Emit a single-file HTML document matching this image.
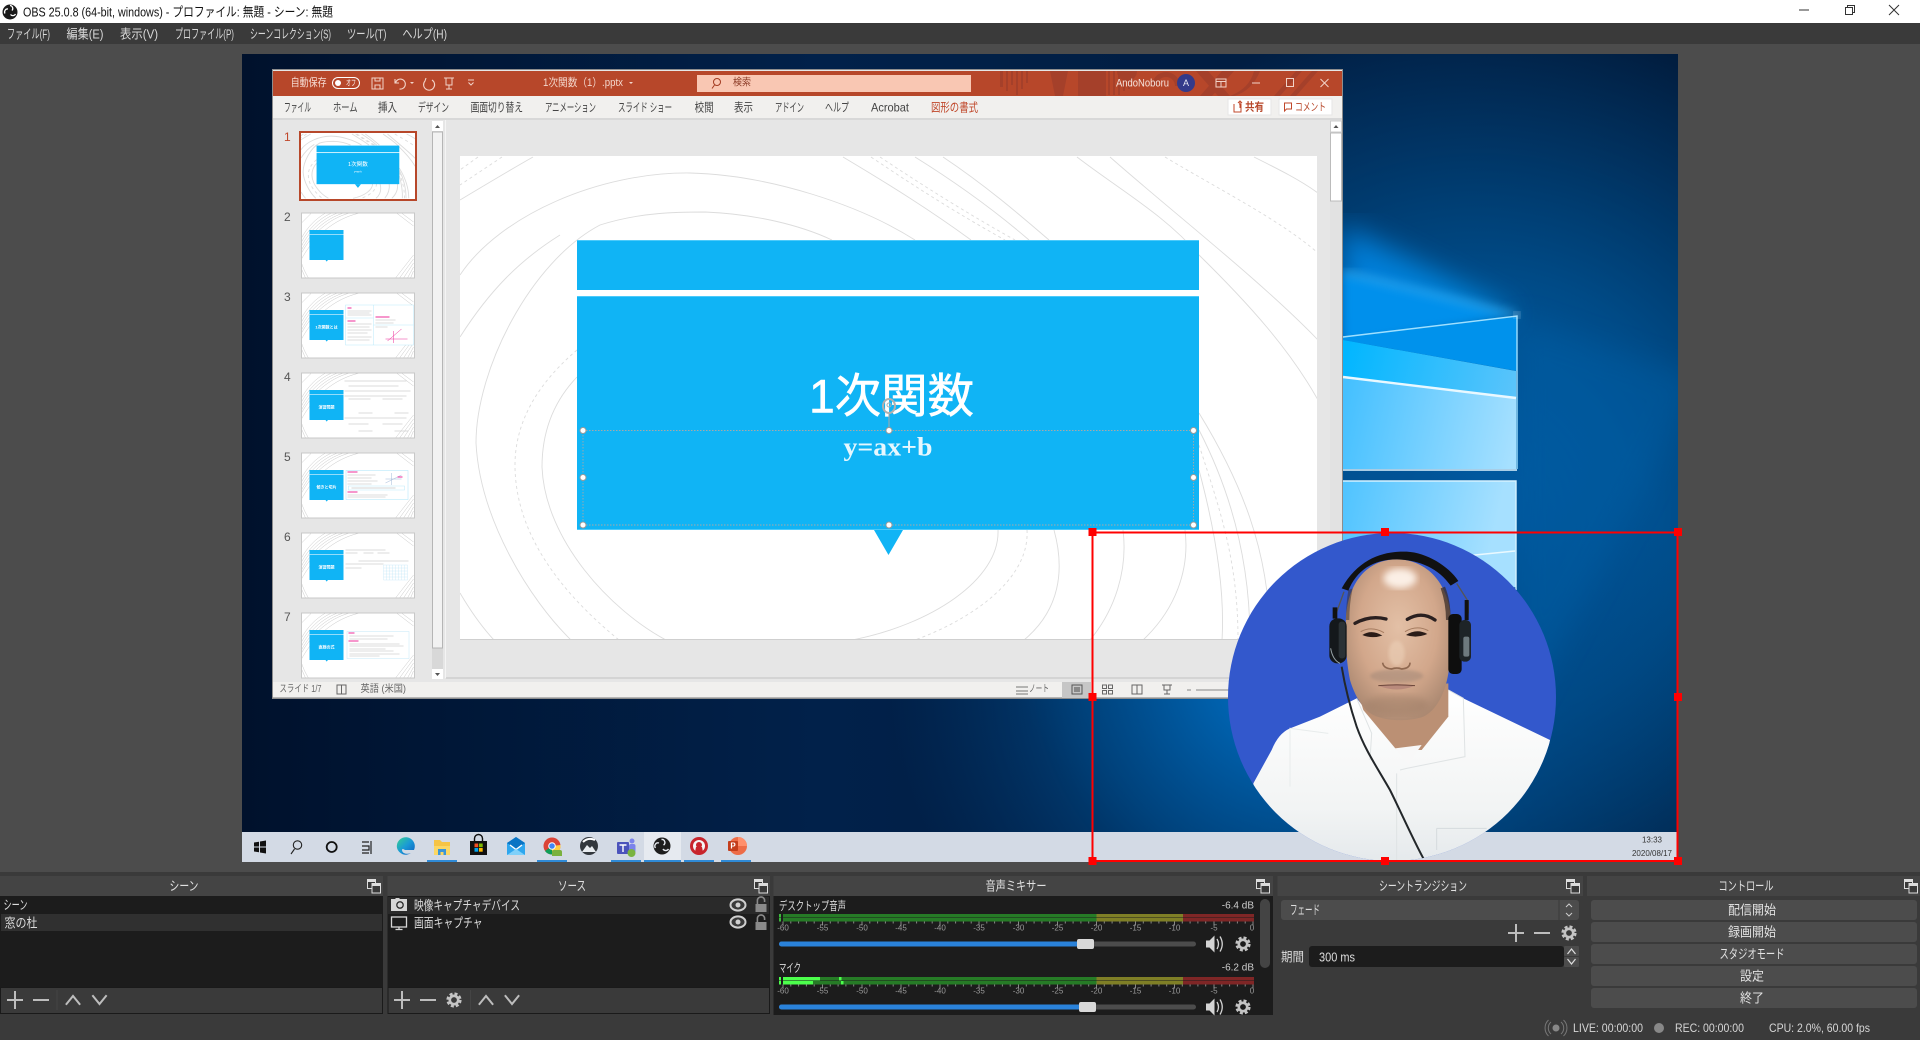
<!DOCTYPE html>
<html lang="ja">
<head>
<meta charset="utf-8">
<title>OBS 25.0.8</title>
<style>
html,body{margin:0;padding:0;width:1920px;height:1040px;overflow:hidden;background:#3a3a3a}
svg{display:block}
text{font-family:"Liberation Sans","Noto Sans CJK JP",sans-serif;dominant-baseline:central}
.m{font-size:13px;fill:#d8d8d8}
.h{font-size:13px;fill:#e0e0e0;text-anchor:middle}
.t{font-size:12px;fill:#444}
.l{font-size:13px;fill:#dcdcdc}
.n{font-size:8px;fill:#999;text-anchor:middle}
.b{font-size:13px;fill:#e2e2e2;text-anchor:middle}
.num{font-size:12px;fill:#555}
.tt{font-size:4px;fill:#fff;text-anchor:middle;font-weight:bold}
.ic{fill:none;stroke:#bdbdbd;stroke-width:2;stroke-linecap:square}
.ar{fill:none;stroke:#dcdcdc;stroke-width:.9;vector-effect:non-scaling-stroke}
.ad{fill:none;stroke:#dcdcdc;stroke-width:.9;stroke-dasharray:3 3;vector-effect:non-scaling-stroke}
.ar2{fill:none;stroke:#c2c2c2;stroke-width:.45}
.hd{fill:#fff;stroke:#9a9a9a;stroke-width:1}
.r{fill:#f00}
</style>
</head>
<body>
<svg width="1920" height="1040" viewBox="0 0 1920 1040" xmlns="http://www.w3.org/2000/svg">
<defs>
<linearGradient id="wb" x1="0" y1="0" x2="1" y2="0"><stop offset="0" stop-color="#00112c"/><stop offset=".4" stop-color="#01214a"/><stop offset="1" stop-color="#011a3a"/></linearGradient>
<radialGradient id="g1" gradientUnits="userSpaceOnUse" cx="1480" cy="500" r="500"><stop offset="0" stop-color="#0068b8"/><stop offset=".45" stop-color="#00508f" stop-opacity=".9"/><stop offset="1" stop-color="#00508f" stop-opacity="0"/></radialGradient>
<radialGradient id="g2" gradientUnits="userSpaceOnUse" cx="1290" cy="670" r="400"><stop offset="0" stop-color="#0074cc"/><stop offset=".5" stop-color="#004f90" stop-opacity=".7"/><stop offset="1" stop-color="#003a70" stop-opacity="0"/></radialGradient>
<linearGradient id="beam" gradientUnits="userSpaceOnUse" x1="1342" y1="300" x2="1520" y2="315"><stop offset="0" stop-color="#0086e6"/><stop offset="1" stop-color="#0096f0"/></linearGradient>
<linearGradient id="p1" gradientUnits="userSpaceOnUse" x1="1343" y1="400" x2="1516" y2="440"><stop offset="0" stop-color="#45c0ff"/><stop offset="1" stop-color="#a6e0ff"/></linearGradient>
<linearGradient id="p0" gradientUnits="userSpaceOnUse" x1="1343" y1="345" x2="1516" y2="390"><stop offset="0" stop-color="#00b6ff"/><stop offset="1" stop-color="#5ac4fb"/></linearGradient>
<radialGradient id="skin" cx=".5" cy=".42" r=".62"><stop offset="0" stop-color="#e3c0a6"/><stop offset=".6" stop-color="#d2a78b"/><stop offset="1" stop-color="#a98770"/></radialGradient>
<linearGradient id="shirt" x1="0" y1="0" x2="0" y2="1"><stop offset="0" stop-color="#ffffff"/><stop offset=".6" stop-color="#f2f4f4"/><stop offset="1" stop-color="#dfe4e8"/></linearGradient>
<linearGradient id="edge" x1="0" y1="0" x2="1" y2="1"><stop offset="0" stop-color="#35d08f"/><stop offset=".5" stop-color="#1a9ad6"/><stop offset="1" stop-color="#0f5fc0"/></linearGradient>
<filter id="bl8"><feGaussianBlur stdDeviation="10"/></filter>
<filter id="bl4"><feGaussianBlur stdDeviation="5"/></filter>
<filter id="bl14"><feGaussianBlur stdDeviation="14"/></filter>
<clipPath id="cprev"><rect x="242" y="54" width="1436" height="808"/></clipPath>
<clipPath id="ccirc"><circle cx="576" cy="531" r="492"/></clipPath>
<g id="arcs">
<path class="ar" d="M460 275C500 215 600 172 690 173C770 175 860 205 915 240"/>
<path class="ar" d="M571 640C530 600 480 520 476 443C476 370 530 262 600 225C640 212 680 212 705 212C755 214 800 225 832 240"/>
<path class="ar" d="M460 337C490 290 520 260 560 235"/>
<path class="ad" d="M577 350C530 390 515 430 515 465C515 540 570 600 619 640"/>
<path class="ar" d="M577 377C555 400 542 430 542 467C545 540 610 610 666 640"/>
<path class="ar" d="M998 530C1000 580 930 625 852 640"/>
<path class="ad" d="M1027 530C1030 580 970 620 915 640"/>
<path class="ar" d="M1054 530C1065 570 1060 610 1024 640"/>
<path class="ar" d="M1123 530C1128 570 1115 610 1090 640"/>
<path class="ar" d="M1185 530C1190 570 1175 610 1143 640"/>
<path class="ar" d="M1199 413C1240 480 1270 550 1270 640"/>
<path class="ar" d="M1199 430C1230 490 1250 560 1250 640"/>
<path class="ad" d="M1199 445C1220 510 1238 560 1238 640"/>
<path class="ar" d="M1199 470C1215 530 1225 590 1222 640"/>
<path class="ar" d="M843 157C890 185 930 210 971 240"/>
<path class="ad" d="M871 157C920 190 960 215 1005 240"/>
<path class="ad" d="M880 157C925 187 970 215 1015 240"/>
<path class="ar" d="M915 157C960 185 1000 215 1029 240"/>
<path class="ar" d="M943 157C985 185 1020 215 1049 240"/>
<path class="ar" d="M1077 157C1120 190 1165 215 1199 255C1250 305 1290 350 1318 400"/>
<path class="ar" d="M1110 157C1170 210 1260 280 1318 340"/>
<path class="ad" d="M1165 157C1220 190 1280 220 1318 253"/>
<path class="ar" d="M1254 157C1280 170 1300 180 1318 193"/>
<path class="ar" d="M533 157C510 170 485 185 460 200"/>
<path class="ad" d="M502 157L460 185"/>
<path class="ad" d="M478 157L460 170"/>
<path class="ar" d="M460 593C470 610 480 625 494 640"/>
</g>
<g id="arcs2">
<path class="ar2" d="M0 25C6 14 14 6 24 0M0 29C7 16 17 6 30 0M0 33C8 18 20 6 36 0M0 37C9 20 23 6 42 0M0 40C10 22 26 6 48 0M0 46C12 24 32 6 58 0M10 0L0 10M112 42L94 65M112 46L98 65M112 50L102 65M112 54L106 65M112 58L109 65M95 0L112 13M100 0L112 9M0 50C2 56 4 60 7 65M0 56L4 65"/>
</g>
<g id="box"><rect x="8" y="17" width="34" height="30" fill="#10b4f5"/><rect x="8" y="21" width="34" height=".7" fill="#cdeefc"/><path d="M24 47h2.4l-1.2 1.6z" fill="#10b4f5"/></g>
<g id="flt"><rect x="-6.5" y="-7.5" width="8" height="9" fill="#3a3a3a" stroke="#ddd" stroke-width="1"/><rect x="-6.5" y="-7.5" width="8" height="2.5" fill="#ddd"/><rect x="-2" y="-3.5" width="8.5" height="9.5" fill="#3a3a3a" stroke="#ddd" stroke-width="1"/><rect x="-2" y="-3.5" width="8.5" height="2.5" fill="#ddd"/></g>
<g id="gear"><circle r="4.2" fill="none" stroke="#c4c4c4" stroke-width="2.6"/><circle r="6.3" fill="none" stroke="#c4c4c4" stroke-width="2.6" stroke-dasharray="3 2"/></g>
<g id="plus"><path class="ic" d="M-7 0H7M0-8V8"/></g>
<g id="minus"><path class="ic" d="M-7 0H7"/></g>
<g id="up"><path class="ic" d="M-6.5 4L0-4 6.5 4" stroke-linecap="round"/></g>
<g id="dn"><path class="ic" d="M-6.5-4L0 4 6.5-4" stroke-linecap="round"/></g>
<g id="eye"><ellipse rx="7.5" ry="5.6" fill="#3a3a3a" stroke="#cfcfcf" stroke-width="2"/><circle r="2.5" fill="#cfcfcf"/></g>
<g id="lock"><rect x="-5.5" y="-1" width="11" height="8" fill="#8a8a8a"/><path d="M-3.6-1V-4.5a3.6 3.6 0 0 1 7.2 0V-3" fill="none" stroke="#8a8a8a" stroke-width="1.6"/></g>
<g id="spk"><path d="M-8-3.5h3.5l5-5v17l-5-5h-3.5z" fill="#d4d4d4"/><path d="M3-5q3 5 0 10M6-7.5q4.5 7.500 0 15" fill="none" stroke="#d4d4d4" stroke-width="1.3"/></g>
</defs>

<!-- base -->
<rect width="1920" height="1040" fill="#3a3a3a"/>
<rect y="44" width="1920" height="828" fill="#4c4c4c"/>

<!-- titlebar -->
<rect width="1920" height="23" fill="#fff"/>
<circle cx="10" cy="12" r="7.5" fill="#1a1a1a"/>
<path d="M10 5.5a3 3 0 0 1 2 5M15.5 14a3 3 0 0 1-5 .5M5 13.5a3 3 0 0 1 3-4.5" fill="none" stroke="#fff" stroke-width="1.3"/>
<text x="23" y="12" font-size="13" fill="#111" textLength="310" lengthAdjust="spacingAndGlyphs">OBS 25.0.8 (64-bit, windows) - プロファイル: 無題 - シーン: 無題</text>
<path d="M1799 10h10" stroke="#333" stroke-width="1"/>
<path d="M1845.5 7.5h7v7h-7zM1847.5 7.5v-2h7v7h-2" fill="none" stroke="#333" stroke-width="1"/>
<path d="M1889 5l10 10M1899 5l-10 10" stroke="#333" stroke-width="1"/>

<!-- menubar -->
<rect y="23" width="1920" height="21" fill="#3a3a3a"/>
<text class="m" x="7" y="34" textLength="43" lengthAdjust="spacingAndGlyphs">ファイル(F)</text>
<text class="m" x="66.5" y="34" textLength="37" lengthAdjust="spacingAndGlyphs">編集(E)</text>
<text class="m" x="120" y="34" textLength="38" lengthAdjust="spacingAndGlyphs">表示(V)</text>
<text class="m" x="175" y="34" textLength="59" lengthAdjust="spacingAndGlyphs">プロファイル(P)</text>
<text class="m" x="250" y="34" textLength="81" lengthAdjust="spacingAndGlyphs">シーンコレクション(S)</text>
<text class="m" x="347" y="34" textLength="39.5" lengthAdjust="spacingAndGlyphs">ツール(T)</text>
<text class="m" x="402.4" y="34" textLength="44.6" lengthAdjust="spacingAndGlyphs">ヘルプ(H)</text>

<!-- preview wallpaper -->
<g clip-path="url(#cprev)">
<rect x="242" y="54" width="1436" height="808" fill="url(#wb)"/>
<rect x="242" y="54" width="1436" height="808" fill="url(#g1)"/>
<rect x="242" y="54" width="1436" height="808" fill="url(#g2)"/>
<path d="M1517 315L1342 225V345z" fill="url(#beam)" opacity=".85" filter="url(#bl14)"/>
<path d="M1517 315L1342 272V345z" fill="#0090ec" filter="url(#bl4)"/>
<path d="M1517 315L1343 272" stroke="#6fd0ff" stroke-width="3" opacity=".7" filter="url(#bl4)"/>
<path d="M1517 318L1516 700H1530L1700 380z" fill="#005da3" opacity=".45" filter="url(#bl14)"/>
<path d="M1343 337L1517 316V371L1343 340z" fill="#0092ec"/>
<path d="M1343 340L1516 371V398L1343 377z" fill="url(#p0)"/>
<path d="M1343 377L1516 398V469H1343z" fill="url(#p1)"/>
<path d="M1343 377L1516 398" stroke="#e9f8ff" stroke-width="2.4"/>
<path d="M1343 337L1517 316V469" fill="none" stroke="#9fe0ff" stroke-width="1.4"/>
<path d="M1343 470H1517" stroke="#dff5ff" stroke-width="1.6"/>
<circle cx="1517" cy="315" r="3" fill="#e8f8ff" filter="url(#bl4)"/>
<path d="M1343 481H1516V587L1343 615z" fill="url(#p1)"/>
<path d="M1343 481H1516V590" fill="none" stroke="#d5f2ff" stroke-width="1.4"/>
<path d="M1465 556l50-5" stroke="#eaf9ff" stroke-width="1.5"/>
<!-- taskbar -->
<rect x="242" y="832" width="1436" height="30" fill="#d3dae5"/>
<rect x="644" y="832" width="37" height="30" fill="#e6eaf0"/>
<path d="M254 842.5l5-.8v4.8h-5zM260 841.500l6-1v6h-6zM254 847.500h5v4.800l-5-.8zM260 847.500h6v6l-6-1z" fill="#111"/>
<circle cx="297.500" cy="845" r="4.200" fill="none" stroke="#222" stroke-width="1.100"/><path d="M294.500 849l-3.500 5" stroke="#222" stroke-width="1.100"/>
<circle cx="331.700" cy="847" r="5" fill="none" stroke="#111" stroke-width="1.800"/>
<path d="M362 842h7M362 846h7v4h-7M362 853h7M371 841v13" fill="none" stroke="#222" stroke-width="1.200"/>
<path d="M397 848a9 9 0 1 1 17 2h-9q-3-2-3 0c0 3 4 5 9 3a9 9 0 0 1-14-5z" fill="url(#edge)"/>
<path d="M434 840h6l2 2h8v7h-16z" fill="#f6c445"/><path d="M434 846h16v9h-16z" fill="#fbd764"/><path d="M438 855v-6h8v6h-2.500v-3h-3v3z" fill="#3a96d8"/>
<rect x="470" y="841" width="17" height="14" fill="#111"/><path d="M474.500 841v-2.500a4 4 0 0 1 8 0v2.500" fill="none" stroke="#111" stroke-width="1.400"/>
<rect x="474.500" y="843.500" width="3.700" height="3.700" fill="#f25022"/><rect x="479" y="843.500" width="3.700" height="3.700" fill="#7fba00"/><rect x="474.500" y="848" width="3.700" height="3.700" fill="#00a4ef"/><rect x="479" y="848" width="3.700" height="3.700" fill="#ffb900"/>
<path d="M507 843L516 837L525 843V855H507z" fill="#2ea6ee"/><path d="M507 843L516 837L525 843L516 849z" fill="#0a74c4"/><path d="M510 845L516 849.500L522 845" fill="none" stroke="#fff" stroke-width="1.400"/><path d="M507 855L516 849L525 855z" fill="#7fd0fa"/>
<circle cx="552" cy="846" r="8.500" fill="#db4437"/><path d="M552 846l8.500-1a8.500 8.500 0 0 1-9 9.500z" fill="#ffcd40"/><path d="M552 846l-7 5a8.500 8.500 0 0 0 7 3.500z" fill="#0f9d58"/><circle cx="552" cy="846" r="3.300" fill="#4285f4" stroke="#fff"/>
<path d="M552 855a5 5 0 0 1 10 0v1h-10z" fill="#7ab13e"/><rect x="552" y="850" width="10" height="6" rx="2" fill="#7ab13e"/>
<circle cx="589" cy="846" r="9" fill="#32373d"/><path d="M582 852l5-7 3 3 2-2 4 6z" fill="#e8ecf0"/><path d="M583 842q5-5 12-2" fill="none" stroke="#fff" stroke-width="2"/>
<rect x="617" y="842" width="12" height="12" rx="1" fill="#4b53bc"/><path d="M619.500 845h7M623 845v7" stroke="#fff" stroke-width="1.400"/><circle cx="632" cy="841" r="2.500" fill="#7b83eb"/><rect x="629" y="844" width="6.500" height="9" rx="2" fill="#7b83eb"/><circle cx="631.500" cy="853" r="4" fill="#79b340"/>
<circle cx="662" cy="846" r="8.500" fill="#1e1e1e"/><path d="M661.500 839.500a3 3 0 0 1 2 5.500M668.500 849a3.200 3.200 0 0 1-5.500 0M655.500 848a3.200 3.200 0 0 1 3.500-5" fill="none" stroke="#e6eaf0" stroke-width="1.400"/>
<circle cx="699" cy="846" r="9" fill="#c8252c"/><circle cx="699" cy="846" r="6" fill="#f5f5f5"/><circle cx="699" cy="845" r="3" fill="#c8252c"/><path d="M695 852l1-5h6l1 5" fill="#c8252c"/>
<circle cx="738" cy="846" r="9" fill="#ed6c47"/><path d="M738 837a9 9 0 0 1 9 9h-9z" fill="#ff8f6b"/><rect x="728" y="841" width="10" height="10" rx="1" fill="#c43e1c"/><text x="733" y="846" font-size="8" fill="#fff" text-anchor="middle" font-weight="bold">P</text>
<rect x="427" y="860" width="30" height="2" fill="#2f8ad6"/><rect x="537" y="860" width="30" height="2" fill="#2f8ad6"/><rect x="611" y="860" width="30" height="2" fill="#2f8ad6"/><rect x="644" y="860" width="37" height="2" fill="#2f8ad6"/><rect x="684" y="860" width="30" height="2" fill="#2f8ad6"/><rect x="721" y="860" width="30" height="2" fill="#2f8ad6"/>
<text x="1652" y="840" font-size="8" fill="#333" text-anchor="middle">13:33</text>
<text x="1652" y="853.5" font-size="8" fill="#333" text-anchor="middle">2020/08/17</text>
</g>

<!-- PowerPoint window -->
<rect x="272.5" y="69.5" width="1070" height="629" fill="#e6e6e6" stroke="#8d8d8d" stroke-width="1"/>
<rect x="273" y="71" width="1069" height="25" fill="#b7472a"/>
<svg x="273" y="71" width="1069" height="25" viewBox="273 71 1069 25">
<g fill="#a5402a">
<path d="M1000 71h3v16h-3zM1006 71h2v20h-2zM1011 71h2v14h-2zM1016 71h2v24h-2zM1021 71h2v18h-2zM1026 71h2v12h-2z"/>
<path d="M1050 71h18l-5 25h-8zM1078 71h28v25h-28z"/>
<path d="M1108 71h2v24h-2zM1113 71h2v24h-2zM1118 71h2v24h-2zM1123 71h2v20h-2zM1128 71h2v18h-2z"/>
<circle cx="1127" cy="71" r="10"/>
<path d="M1152 86a14 14 0 0 1 28 0h-5a9 9 0 0 0-18 0z"/>
<path d="M1196 71h12l22 25h-12zM1222 71h12l-22 25h-12zM1254 71h6q-8 20-26 25h-4q20-8 24-25z"/>
<path d="M1296 71h6l-22 25h-6zM1312 71h6l-22 25h-6z"/>
</g>
</svg>
<text x="290.6" y="83" font-size="11" fill="#f6dcd3" textLength="36" lengthAdjust="spacingAndGlyphs">自動保存</text>
<rect x="332.5" y="77.5" width="27" height="11" rx="5.5" fill="none" stroke="#fff"/>
<circle cx="338" cy="83" r="3" fill="#fff"/>
<text x="346" y="83" font-size="8" fill="#fff" textLength="10" lengthAdjust="spacingAndGlyphs">オフ</text>
<path d="M372 78h11v11h-11zM375 78v3h5v-3M375 89v-4h5v4" fill="none" stroke="#f2d3c8" stroke-width="1"/>
<path d="M395 79v4h4M395.5 83a5 5 0 1 1 4 6" fill="none" stroke="#f2d3c8" stroke-width="1.1"/>
<path d="M410 82l2 2 2-2" fill="#f2d3c8" stroke="none"/>
<path d="M432 80a5.5 5.5 0 1 1-7 1l1-3" fill="none" stroke="#f2d3c8" stroke-width="1.1"/>
<path d="M444 78h10M446 78v7h6v-7M449 85v4M446 89h6" fill="none" stroke="#f2d3c8" stroke-width="1"/>
<path d="M468 80h6M468.5 82.5l2.5 2.5 2.5-2.5" fill="none" stroke="#f2d3c8" stroke-width="1"/>
<text x="543" y="83" font-size="11" fill="#f3d6cb" textLength="80" lengthAdjust="spacingAndGlyphs">1次関数（1）.pptx</text>
<path d="M629 82l2 2 2-2z" fill="#f3d6cb"/>
<rect x="697" y="75" width="274" height="17" fill="#f9c7b3"/>
<circle cx="717" cy="82" r="3.5" fill="none" stroke="#a33a20" stroke-width="1"/><path d="M714.5 85l-2.5 3.5" stroke="#a33a20"/>
<text x="733" y="83" font-size="10" fill="#8c3b26" textLength="18" lengthAdjust="spacingAndGlyphs">検索</text>
<text x="1116" y="83.500" font-size="11" fill="#f6e4dd" textLength="53" lengthAdjust="spacingAndGlyphs">AndoNoboru</text>
<circle cx="1186" cy="83" r="9" fill="#333a8a"/>
<text x="1186" y="83" font-size="9" fill="#e6e6f2" text-anchor="middle">A</text>
<path d="M1216 79h10v8h-10zM1216 81.5h10M1221 81.5v5.5" fill="none" stroke="#f2d3c8"/>
<path d="M1252 83h8" stroke="#f2d3c8"/>
<rect x="1286.5" y="78.5" width="7" height="8" fill="none" stroke="#f2d3c8"/>
<path d="M1320.5 79l8 8M1328.5 79l-8 8" stroke="#f2d3c8"/>

<!-- tabs -->
<rect x="273" y="96" width="1069" height="22" fill="#f1f0ee"/>
<rect x="273" y="118" width="1069" height="2" fill="#d8d8d8"/>
<text class="t" x="284" y="107.500" textLength="27" lengthAdjust="spacingAndGlyphs">ファイル</text>
<text class="t" x="333" y="107.500" textLength="24.5" lengthAdjust="spacingAndGlyphs">ホーム</text>
<text class="t" x="378" y="107.500" textLength="19" lengthAdjust="spacingAndGlyphs">挿入</text>
<text class="t" x="418" y="107.500" textLength="31" lengthAdjust="spacingAndGlyphs">デザイン</text>
<text class="t" x="470.6" y="107.500" textLength="52.4" lengthAdjust="spacingAndGlyphs">画面切り替え</text>
<text class="t" x="545" y="107.500" textLength="51" lengthAdjust="spacingAndGlyphs">アニメーション</text>
<text class="t" x="618" y="107.500" textLength="54" lengthAdjust="spacingAndGlyphs">スライド ショー</text>
<text class="t" x="694.6" y="107.500" textLength="19" lengthAdjust="spacingAndGlyphs">校閲</text>
<text class="t" x="734" y="107.500" textLength="19" lengthAdjust="spacingAndGlyphs">表示</text>
<text class="t" x="775" y="107.500" textLength="29" lengthAdjust="spacingAndGlyphs">アドイン</text>
<text class="t" x="825" y="107.500" textLength="24" lengthAdjust="spacingAndGlyphs">ヘルプ</text>
<text class="t" x="871" y="107.500" textLength="38" lengthAdjust="spacingAndGlyphs">Acrobat</text>
<text class="t" style="fill:#c0472a" x="931" y="107.500" textLength="47" lengthAdjust="spacingAndGlyphs">図形の書式</text>
<rect x="1228" y="99" width="43" height="16" fill="#fff" stroke="#e6e6e6"/>
<path d="M1234 104v8h7v-8h-2M1238 103l2-2 2 2M1240 102v6" fill="none" stroke="#c0472a"/>
<text x="1245" y="107.500" font-size="11" fill="#b7472a" font-weight="bold" textLength="19" lengthAdjust="spacingAndGlyphs">共有</text>
<rect x="1279" y="99" width="53" height="16" fill="#fff" stroke="#e6e6e6"/>
<path d="M1284.5 103h7v6h-5l-2 2z" fill="none" stroke="#c0472a"/>
<text x="1295" y="107.500" font-size="11" fill="#b7472a" textLength="31" lengthAdjust="spacingAndGlyphs">コメント</text>

<!-- thumbnail pane -->
<rect x="445" y="120" width="1" height="558" fill="#f4f4f4"/>
<rect x="432" y="121" width="11" height="558" fill="#d8d8d8"/>
<rect x="432.5" y="132" width="10" height="516" fill="#f2f2f2" stroke="#b5b5b5"/>
<rect x="432" y="121" width="11" height="10" fill="#fff"/><path d="M435 128l2.5-3 2.5 3z" fill="#555"/>
<rect x="432" y="669" width="11" height="10" fill="#fff"/><path d="M435 673l2.5 3 2.5-3z" fill="#555"/>
<text class="num" x="284" y="137" style="fill:#c0472a">1</text>
<text class="num" x="284" y="217">2</text>
<text class="num" x="284" y="297">3</text>
<text class="num" x="284" y="377">4</text>
<text class="num" x="284" y="457">5</text>
<text class="num" x="284" y="537">6</text>
<text class="num" x="284" y="617">7</text>

<rect x="300" y="132" width="116" height="68" fill="#fff" stroke="#b7472a" stroke-width="2"/>
<svg x="301" y="133" width="114" height="66" viewBox="460 156 857 483">
<use href="#arcs"/>
<rect x="577" y="244" width="622" height="50" fill="#10b4f5"/><rect x="577" y="300" width="622" height="234" fill="#10b4f5"/><path d="M865 534h46l-23 28z" fill="#10b4f5"/>
<text x="888" y="391" font-size="42" fill="#fff" text-anchor="middle">1次関数</text>
<text x="888" y="441" font-size="18" fill="#fff" text-anchor="middle">y=ax+b</text>
</svg>

<!-- thumb 2 -->
<svg x="301.5" y="213" width="113" height="65" viewBox="0 0 113 65"><rect width="113" height="65" fill="#fff"/><use href="#arcs2"/><use href="#box"/></svg>
<rect x="301.5" y="213" width="113" height="65" fill="none" stroke="#c8c8c8"/>
<!-- thumb 3 -->
<svg x="301.5" y="293" width="113" height="65" viewBox="0 0 113 65"><rect width="113" height="65" fill="#fff"/><use href="#arcs2"/><use href="#box"/>
<text class="tt" x="25" y="34">1次関数とは</text>
<rect x="44" y="12" width="68" height="40" fill="#fff" stroke="#a8e4fa" stroke-width=".4"/><path d="M72 12v40M72 32h40M44 25h28" stroke="#a8e4fa" stroke-width=".4"/>
<path d="M46 15h4M46 28h8M74 24h14" stroke="#ec2e9a" stroke-width=".9"/>
<path d="M46 18h24M46 20h22M46 22h24M46 31h24M46 34h22M46 37h24M46 40h20M46 44h24M46 47h22M74 27h20M74 30h18M74 34h12" stroke="#bbb" stroke-width=".6"/>
<path d="M86 48l14-12M92 38v12M84 46h22" stroke="#ec2e9a" stroke-width=".5"/></svg>
<rect x="301.5" y="293" width="113" height="65" fill="none" stroke="#c8c8c8"/>
<!-- thumb 4 -->
<svg x="301.5" y="373" width="113" height="65" viewBox="0 0 113 65"><rect width="113" height="65" fill="#fff"/><use href="#arcs2"/><use href="#box"/>
<text class="tt" x="25" y="34">演習問題</text>
<path d="M43 8h62M47 13h50M43 18h66M43 23h62M47 26h22M81 26h20M57 40h14M93 40h14M43 45h62M47 51h20M81 51h20M57 58h14M93 58h14" stroke="#cfcfcf" stroke-width=".7"/></svg>
<rect x="301.5" y="373" width="113" height="65" fill="none" stroke="#c8c8c8"/>
<!-- thumb 5 -->
<svg x="301.5" y="453" width="113" height="65" viewBox="0 0 113 65"><rect width="113" height="65" fill="#fff"/><use href="#arcs2"/><use href="#box"/>
<text class="tt" x="25" y="34">傾きと切片</text>
<rect x="44.5" y="17.5" width="62" height="29" fill="#fff" stroke="#a8e4fa" stroke-width=".5"/>
<path d="M46 19h10M46 39h10" stroke="#ec2e9a" stroke-width=".9"/>
<path d="M46 22h28M46 25h24M46 28h30M46 31h24M46 42h40M46 44h38" stroke="#bbb" stroke-width=".6"/>
<rect x="47" y="33" width="56" height="4" fill="none" stroke="#a8e4fa" stroke-width=".4"/>
<path d="M50 35h44" stroke="#aaa" stroke-width=".6"/>
<path d="M84 30l16-8M90 20v12M84 26h16" stroke="#9fb8d8" stroke-width=".5"/><path d="M96 24h5" stroke="#ec2e9a"/></svg>
<rect x="301.5" y="453" width="113" height="65" fill="none" stroke="#c8c8c8"/>
<!-- thumb 6 -->
<svg x="301.5" y="533" width="113" height="65" viewBox="0 0 113 65"><rect width="113" height="65" fill="#fff"/><use href="#arcs2"/><use href="#box"/>
<text class="tt" x="25" y="34">演習問題</text>
<path d="M44 17h40M44 20h12M62 20h10M76 20h12M57 28h50M44 31h38M44 35h16" stroke="#cfcfcf" stroke-width=".7"/>
<g stroke="#c4e8f8" stroke-width=".4"><path d="M82 32h24M82 35h24M82 38h24M82 41h24M82 44h24M82 47h24M82 32v15M85 32v15M88 32v15M91 32v15M94 32v15M97 32v15M100 32v15M103 32v15M106 32v15"/></g></svg>
<rect x="301.5" y="533" width="113" height="65" fill="none" stroke="#c8c8c8"/>
<!-- thumb 7 -->
<svg x="301.5" y="613" width="113" height="65" viewBox="0 0 113 65"><rect width="113" height="65" fill="#fff"/><use href="#arcs2"/><use href="#box"/>
<text class="tt" x="25" y="34">直線の式</text>
<rect x="45.5" y="18.5" width="62" height="27" fill="#fff" stroke="#c4e8f8" stroke-width=".5"/>
<path d="M47 20h6M47 28h10" stroke="#ec2e9a" stroke-width=".9"/>
<path d="M48 23h44M48 26h38M48 31h50M48 33h54M48 36h36M48 38h44M48 41h50M48 43h30" stroke="#bbb" stroke-width=".6"/></svg>
<rect x="301.5" y="613" width="113" height="65" fill="none" stroke="#c8c8c8"/>

<!-- main slide -->
<svg x="460" y="156" width="857" height="483" viewBox="460 156 857 483">
<rect x="460" y="156" width="857" height="483" fill="#fff"/>
<use href="#arcs"/>
</svg>
<rect x="460" y="639" width="857" height="1" fill="#cfcfcf"/>
<rect x="577" y="240" width="622" height="50" fill="#10b4f5"/>
<rect x="577" y="296" width="622" height="234" fill="#10b4f5"/>
<path d="M577 240.500H1199M577 296.500H1199M577 529.500H1199" stroke="#4ccafa" stroke-width="1"/>
<path d="M874 530h29l-14.500 25z" fill="#10b4f5"/>
<text x="891.500" y="396" font-size="47" fill="#fff" stroke="#fff" stroke-width=".5" text-anchor="middle" textLength="165" lengthAdjust="spacingAndGlyphs">1次関数</text>
<text x="888" y="447" font-size="26" fill="#e6f7fe" text-anchor="middle" font-weight="bold" style="font-family:'Liberation Serif','Noto Serif CJK SC',serif" textLength="89" lengthAdjust="spacingAndGlyphs">y=ax+b</text>
<rect x="583" y="430.500" width="610.500" height="94.500" fill="none" stroke="#a8a8a8" stroke-width=".9" stroke-dasharray="1.500 1.500"/>
<path d="M889 413V430" stroke="#a8a8a8"/>
<circle class="hd" cx="583" cy="430.500" r="3"/><circle class="hd" cx="889" cy="430.500" r="3"/><circle class="hd" cx="1193.500" cy="430.500" r="3"/>
<circle class="hd" cx="583" cy="477.500" r="3"/><circle class="hd" cx="1193.500" cy="477.500" r="3"/>
<circle class="hd" cx="583" cy="525" r="3"/><circle class="hd" cx="889" cy="525" r="3"/><circle class="hd" cx="1193.500" cy="525" r="3"/>
<ellipse cx="889" cy="406" rx="6" ry="7" fill="none" stroke="#b0b0b0" stroke-width="2"/>
<circle cx="889" cy="405" r="2" fill="none" stroke="#b0b0b0"/>

<!-- main right scrollbar -->
<rect x="1330" y="120" width="12" height="562" fill="#e2e2e2"/>
<rect x="1330.5" y="133" width="11" height="68" fill="#fff" stroke="#bbb"/>
<rect x="1330.5" y="121" width="11" height="11" fill="#fff" stroke="#ccc"/><path d="M1333.5 128l2.5-3 2.5 3z" fill="#555"/>
<rect x="446" y="677" width="896" height="2" fill="#d4d4d4"/>

<!-- status bar -->
<rect x="273" y="682" width="1069" height="15.5" fill="#f1f0ee"/>
<rect x="273" y="697" width="1069" height="1" fill="#b5b5b5"/>
<text x="279.5" y="689.5" font-size="10" fill="#666" textLength="42" lengthAdjust="spacingAndGlyphs">スライド 1/7</text>
<path d="M337 685h9v9h-9zM341.5 685v9" fill="none" stroke="#666"/>
<text x="360.5" y="689.5" font-size="10" fill="#666" textLength="45.5" lengthAdjust="spacingAndGlyphs">英語 (米国)</text>
<path d="M1016 687h12M1016 691h12M1016 694h12" stroke="#777"/>
<text x="1029" y="689.5" font-size="10" fill="#666" textLength="20" lengthAdjust="spacingAndGlyphs">ノート</text>
<rect x="1062" y="682" width="29" height="16" fill="#c6c6c6"/>
<rect x="1072" y="685" width="10" height="9" fill="none" stroke="#555"/><rect x="1074" y="687" width="6" height="5" fill="#888"/>
<path d="M1102.500 685h4v3.500h-4zM1108.500 685h4v3.500h-4zM1102.500 690.500h4v3.500h-4zM1108.500 690.500h4v3.500h-4z" fill="none" stroke="#666"/>
<path d="M1132 685h10v9h-10zM1137 685v9" fill="none" stroke="#666"/>
<path d="M1162 685h10M1164 685v5h6v-5M1167 690v4M1164 694h6" fill="none" stroke="#666"/>
<path d="M1187 690h4M1196 690h40" stroke="#888"/>

<!-- webcam person -->
<g transform="translate(1200 520) scale(.33333)">
<circle cx="576" cy="531" r="492" fill="#3358cc"/>
<g clip-path="url(#ccirc)">
<path d="M160 790L215 690Q235 640 270 625L360 590L470 535L600 690L745 510L790 535L1050 660L1040 730L1000 1100H200Z" fill="url(#shirt)"/>
<path d="M475 520L490 570L590 690H665L745 590V490z" fill="#bb9074"/>
<path d="M585 685L665 675L625 732z" fill="#f8f8f8"/>
<path d="M470 535L515 640L510 720M745 510L790 535L795 710L620 745L600 750M590 760L590 1020" fill="none" stroke="#dfe3e4" stroke-width="3"/>
<path d="M710 925H860M710 925V990" fill="none" stroke="#d5dadd" stroke-width="3"/>
<path d="M385 640L270 625L270 800" fill="none" stroke="#e8ecec" stroke-width="3"/>
<!-- face -->
<path d="M590 118C500 118 445 190 438 290C435 350 438 420 450 480C465 530 490 570 520 585C560 605 630 605 670 590C710 570 735 520 745 460C755 400 755 340 752 290C745 190 680 118 590 118Z" fill="url(#skin)"/>
<ellipse cx="600" cy="175" rx="50" ry="30" fill="#fdf3ea" opacity=".95" filter="url(#bl8)"/>
<path d="M735 200Q752 240 752 300L738 300Q738 250 722 205z" fill="#3b2e28" opacity=".75"/>
<path d="M445 210Q438 250 438 300L448 300Q448 250 458 205z" fill="#3b2e28" opacity=".5"/>
<ellipse cx="590" cy="468" rx="80" ry="20" fill="#9d8475" opacity=".5" filter="url(#bl4)"/>
<ellipse cx="590" cy="555" rx="95" ry="30" fill="#93755f" opacity=".35" filter="url(#bl8)"/>
<!-- brows -->
<path d="M465 310Q510 285 558 297" fill="none" stroke="#2a2020" stroke-width="10" stroke-linecap="round"/>
<path d="M622 298Q665 272 705 300" fill="none" stroke="#2a2020" stroke-width="10" stroke-linecap="round"/>
<!-- eyes -->
<path d="M487 345Q515 327 547 347Q515 357 487 345z" fill="#2a1c18"/>
<path d="M618 345Q650 324 682 342Q650 356 618 345z" fill="#2a1c18"/>
<path d="M482 335Q515 317 552 338M615 335Q650 314 685 332" fill="none" stroke="#a67c60" stroke-width="3"/>
<!-- nose -->
<path d="M548 428Q550 445 575 447Q590 441 605 447Q630 445 630 428" fill="none" stroke="#8f6850" stroke-width="5"/>
<ellipse cx="590" cy="400" rx="24" ry="38" fill="#ecd0b8" opacity=".6" filter="url(#bl4)"/>
<!-- mouth -->
<path d="M535 497Q590 487 645 497Q590 520 535 497z" fill="#b98a7c"/>
<path d="M535 497Q590 492 645 497" fill="none" stroke="#6d483c" stroke-width="3"/>
<!-- headband -->
<path d="M425 205C478 112 555 93 620 95C680 98 745 138 775 183L752 197C715 145 660 120 590 118C520 118 470 150 445 212Z" fill="#111"/>
<!-- arms -->
<path d="M432 215L405 290M770 190L805 245V280" fill="none" stroke="#555" stroke-width="4"/>
<path d="M398 262h14v34h-14zM794 240h12v60h-12z" fill="#111"/>
<!-- ear cups -->
<rect x="388" y="295" width="52" height="135" rx="24" fill="#14181b"/>
<rect x="416" y="305" width="20" height="110" rx="8" fill="#2a3135"/>
<path d="M392 385Q398 420 420 430" fill="none" stroke="#9aa6aa" stroke-width="3"/>
<rect x="745" y="282" width="40" height="180" rx="14" fill="#0e0e0e"/>
<rect x="778" y="300" width="35" height="125" rx="16" fill="#1e2427"/>
<rect x="790" y="350" width="18" height="60" rx="6" fill="#6e7a7e"/>
<!-- cable -->
<path d="M425 440C435 500 450 560 470 620C495 690 530 740 570 810C600 870 640 960 670 1015" fill="none" stroke="#23272a" stroke-width="6"/>
</g>
</g>

<!-- selection box -->
<rect x="1092.5" y="532.5" width="585" height="328.500" fill="none" stroke="#f00" stroke-width="2"/>
<rect class="r" x="1088.500" y="528" width="8" height="8"/><rect class="r" x="1381" y="528" width="8" height="8"/><rect class="r" x="1674" y="528" width="8" height="8"/>
<rect class="r" x="1088.500" y="693" width="8" height="8"/><rect class="r" x="1674" y="693" width="8" height="8"/>
<rect class="r" x="1088.500" y="857" width="8" height="8"/><rect class="r" x="1381" y="857" width="8" height="8"/><rect class="r" x="1674" y="857" width="8" height="8"/>

<!-- dock panels -->
<rect y="872" width="1920" height="168" fill="#3a3a3a"/>
<g fill="#444">
<rect x="0" y="876" width="383" height="20"/><rect x="387.500" y="876" width="382.500" height="20"/>
<rect x="773.500" y="876" width="499.500" height="20"/><rect x="1277.500" y="876" width="305.500" height="20"/><rect x="1587" y="876" width="333" height="20"/>
</g>
<text class="h" x="184" y="886" textLength="29" lengthAdjust="spacingAndGlyphs">シーン</text>
<text class="h" x="572" y="886" textLength="28" lengthAdjust="spacingAndGlyphs">ソース</text>
<text class="h" x="1016" y="886" textLength="61" lengthAdjust="spacingAndGlyphs">音声ミキサー</text>
<text class="h" x="1423" y="886" textLength="88" lengthAdjust="spacingAndGlyphs">シーントランジション</text>
<text class="h" x="1746" y="886" textLength="55" lengthAdjust="spacingAndGlyphs">コントロール</text>
<use href="#flt" x="374" y="887"/><use href="#flt" x="761" y="887"/><use href="#flt" x="1263" y="887"/><use href="#flt" x="1573" y="887"/><use href="#flt" x="1911" y="887"/>

<!-- scenes -->
<rect x="0" y="896" width="383" height="91" fill="#1c1c1c"/>
<rect x="1" y="914" width="381" height="17" fill="#303030"/>
<text class="l" x="3.500" y="905" textLength="24" lengthAdjust="spacingAndGlyphs">シーン</text>
<text class="l" x="4.500" y="923" textLength="33" lengthAdjust="spacingAndGlyphs">窓の杜</text>
<rect x=".5" y="987.500" width="382" height="26" fill="#3a3a3a" stroke="#1a1a1a"/>
<use href="#plus" x="15" y="1000"/><use href="#minus" x="41" y="1000"/><rect x="56.500" y="990" width="1" height="20" fill="#444"/><use href="#up" x="73" y="1000"/><use href="#dn" x="99.500" y="1000"/>

<!-- sources -->
<rect x="387.500" y="896" width="382.500" height="91" fill="#1c1c1c"/>
<rect x="388" y="897" width="381" height="17" fill="#2a2a2a"/>
<path d="M391 899h4l1-1h3l1 1h7v12h-16z" fill="#d6d6d6"/><circle cx="400" cy="905" r="3.200" fill="#d6d6d6" stroke="#2a2a2a" stroke-width="1.300"/>
<rect x="391.500" y="917" width="15" height="10" fill="none" stroke="#d6d6d6" stroke-width="1.300"/><path d="M399 927v2M395.500 929.500h7" stroke="#d6d6d6" stroke-width="1.300"/>
<text class="l" x="414" y="905.500" textLength="106" lengthAdjust="spacingAndGlyphs">映像キャプチャデバイス</text>
<text class="l" x="414" y="923" textLength="68.500" lengthAdjust="spacingAndGlyphs">画面キャプチャ</text>
<use href="#eye" x="738" y="905"/><use href="#eye" x="738" y="922"/>
<use href="#lock" x="761" y="905"/><use href="#lock" x="761" y="923"/>
<rect x="388" y="987.500" width="381.500" height="26" fill="#3a3a3a" stroke="#1a1a1a"/>
<use href="#plus" x="402" y="1000"/><use href="#minus" x="428" y="1000"/><use href="#gear" x="454" y="1000"/><rect x="470" y="990" width="1" height="20" fill="#444"/><use href="#up" x="486" y="1000"/><use href="#dn" x="512" y="1000"/>

<!-- mixer -->
<rect x="773.500" y="896" width="499.500" height="119" fill="#1c1c1c"/>
<rect x="1260" y="899" width="10" height="69" rx="5" fill="#444"/>
<text class="l" x="779" y="906" style="font-size:12px" textLength="67" lengthAdjust="spacingAndGlyphs">デスクトップ音声</text>
<text x="1254" y="906" font-size="10" fill="#ccc" text-anchor="end">-6.4 dB</text>
<text class="l" x="779" y="968" style="font-size:12px" textLength="22" lengthAdjust="spacingAndGlyphs">マイク</text>
<text x="1254" y="968" font-size="10" fill="#ccc" text-anchor="end">-6.2 dB</text>
<g>
<rect x="783" y="914" width="313.500" height="3.500" fill="#267b26"/><rect x="783" y="918" width="313.500" height="3.500" fill="#267b26"/>
<rect x="1096.500" y="914" width="86.500" height="3.500" fill="#7f7f26"/><rect x="1096.500" y="918" width="86.500" height="3.500" fill="#7f7f26"/>
<rect x="1183" y="914" width="71" height="3.500" fill="#7f2626"/><rect x="1183" y="918" width="71" height="3.500" fill="#7f2626"/>
<rect x="779" y="914" width="2" height="3.500" fill="#3cb83c"/><rect x="779" y="918" width="2" height="3.500" fill="#3cb83c"/>
<rect x="783" y="977" width="313.500" height="3.500" fill="#267b26"/><rect x="783" y="981" width="313.500" height="3.500" fill="#267b26"/>
<rect x="1096.500" y="977" width="86.500" height="3.500" fill="#7f7f26"/><rect x="1096.500" y="981" width="86.500" height="3.500" fill="#7f7f26"/>
<rect x="1183" y="977" width="71" height="3.500" fill="#7f2626"/><rect x="1183" y="981" width="71" height="3.500" fill="#7f2626"/>
<rect x="779" y="977" width="2" height="3.500" fill="#4cff4c"/><rect x="779" y="981" width="2" height="3.500" fill="#4cff4c"/>
<rect x="783" y="977" width="37" height="3.500" fill="#4cff4c"/><rect x="783" y="981" width="30" height="3.500" fill="#4cff4c"/>
<rect x="839" y="977" width="2.500" height="3.500" fill="#4cff4c"/><rect x="841" y="981" width="2.500" height="3.500" fill="#4cff4c"/>
</g>
<g stroke="#888" stroke-width="1">
<path d="M783 921.500v4M790.800 921.500v2M798.600 921.500v2M806.400 921.500v2M814.200 921.500v2M822.500 921.500v4M830.300 921.500v2M838.100 921.500v2M845.900 921.500v2M853.700 921.500v2M862 921.500v4M869.800 921.500v2M877.600 921.500v2M885.400 921.500v2M893.200 921.500v2M901 921.500v4M908.800 921.500v2M916.600 921.500v2M924.400 921.500v2M932.200 921.500v2M940 921.500v4M947.800 921.500v2M955.600 921.500v2M963.400 921.500v2M971.200 921.500v2M979 921.500v4M986.800 921.500v2M994.600 921.500v2M1002.400 921.500v2M1010.200 921.500v2M1018.500 921.500v4M1026.300 921.500v2M1034.100 921.500v2M1041.900 921.500v2M1049.700 921.500v2M1057.500 921.500v4M1065.300 921.500v2M1073.100 921.500v2M1080.900 921.500v2M1088.700 921.500v2M1096.500 921.500v4M1104.300 921.500v2M1112.100 921.500v2M1119.900 921.500v2M1127.700 921.500v2M1135.500 921.500v4M1143.300 921.500v2M1151.100 921.500v2M1158.900 921.500v2M1166.700 921.500v2M1174.500 921.500v4M1182.300 921.500v2M1190.100 921.500v2M1197.900 921.500v2M1205.700 921.500v2M1214 921.500v4M1221.800 921.500v2M1229.600 921.500v2M1237.400 921.500v2M1245.200 921.500v2M1253 921.500v4"/>
<path transform="translate(0 63)" d="M783 921.500v4M790.800 921.500v2M798.600 921.500v2M806.400 921.500v2M814.200 921.500v2M822.500 921.500v4M830.300 921.500v2M838.100 921.500v2M845.900 921.500v2M853.700 921.500v2M862 921.500v4M869.800 921.500v2M877.600 921.500v2M885.400 921.500v2M893.200 921.500v2M901 921.500v4M908.800 921.500v2M916.600 921.500v2M924.400 921.500v2M932.200 921.500v2M940 921.500v4M947.800 921.500v2M955.600 921.500v2M963.400 921.500v2M971.200 921.500v2M979 921.500v4M986.800 921.500v2M994.600 921.500v2M1002.400 921.500v2M1010.200 921.500v2M1018.500 921.500v4M1026.300 921.500v2M1034.100 921.500v2M1041.900 921.500v2M1049.700 921.500v2M1057.500 921.500v4M1065.300 921.500v2M1073.100 921.500v2M1080.900 921.500v2M1088.700 921.500v2M1096.500 921.500v4M1104.300 921.500v2M1112.100 921.500v2M1119.900 921.500v2M1127.700 921.500v2M1135.500 921.500v4M1143.300 921.500v2M1151.100 921.500v2M1158.900 921.500v2M1166.700 921.500v2M1174.500 921.500v4M1182.300 921.500v2M1190.100 921.500v2M1197.900 921.500v2M1205.700 921.500v2M1214 921.500v4M1221.800 921.500v2M1229.600 921.500v2M1237.400 921.500v2M1245.200 921.500v2M1253 921.500v4"/>
</g>
<g>
<text class="n" x="783" y="928">-60</text><text class="n" x="822.500" y="928">-55</text><text class="n" x="862" y="928">-50</text><text class="n" x="901" y="928">-45</text><text class="n" x="940" y="928">-40</text><text class="n" x="979" y="928">-35</text><text class="n" x="1018.500" y="928">-30</text><text class="n" x="1057.500" y="928">-25</text><text class="n" x="1096.500" y="928">-20</text><text class="n" x="1135.500" y="928">-15</text><text class="n" x="1174.500" y="928">-10</text><text class="n" x="1214" y="928">-5</text><text class="n" x="1252" y="928">0</text>
<text class="n" x="783" y="991">-60</text><text class="n" x="822.500" y="991">-55</text><text class="n" x="862" y="991">-50</text><text class="n" x="901" y="991">-45</text><text class="n" x="940" y="991">-40</text><text class="n" x="979" y="991">-35</text><text class="n" x="1018.500" y="991">-30</text><text class="n" x="1057.500" y="991">-25</text><text class="n" x="1096.500" y="991">-20</text><text class="n" x="1135.500" y="991">-15</text><text class="n" x="1174.500" y="991">-10</text><text class="n" x="1214" y="991">-5</text><text class="n" x="1252" y="991">0</text>
</g>
<rect x="779" y="941.500" width="417" height="5" rx="2.500" fill="#4c4c4c"/><rect x="779" y="941.500" width="306" height="5" rx="2.500" fill="#2a82da"/>
<rect x="1077" y="939" width="17" height="10" rx="2" fill="#d8d8d8"/>
<rect x="779" y="1004.500" width="417" height="5" rx="2.500" fill="#4c4c4c"/><rect x="779" y="1004.500" width="308" height="5" rx="2.500" fill="#2a82da"/>
<rect x="1079" y="1002" width="17" height="10" rx="2" fill="#d8d8d8"/>
<use href="#spk" x="1214" y="944"/><use href="#gear" x="1243" y="944"/>
<use href="#spk" x="1214" y="1007"/><use href="#gear" x="1243" y="1007"/>

<!-- transition -->
<rect x="1281" y="900" width="298" height="20" rx="3" fill="#4c4c4c"/>
<rect x="1558.500" y="900" width="1" height="20" fill="#3a3a3a"/>
<text class="l" x="1290" y="910" textLength="30" lengthAdjust="spacingAndGlyphs">フェード</text>
<path d="M1566 907l3-3 3 3M1566 913l3 3 3-3" fill="none" stroke="#ccc"/>
<use href="#plus" x="1516" y="933"/><use href="#minus" x="1542" y="933"/><use href="#gear" x="1569" y="933"/>
<text class="l" x="1281" y="957" textLength="23" lengthAdjust="spacingAndGlyphs">期間</text>
<rect x="1309" y="946" width="255" height="21" rx="3" fill="#1c1c1c"/>
<text class="l" x="1319" y="957" textLength="36" lengthAdjust="spacingAndGlyphs">300 ms</text>
<rect x="1564" y="946" width="15" height="10" rx="1" fill="#4c4c4c"/><rect x="1564" y="957" width="15" height="10" rx="1" fill="#4c4c4c"/>
<path d="M1567.500 954l4-5 4 5M1567.500 959l4 5 4-5" fill="none" stroke="#ddd" stroke-width="1.200"/>

<!-- controls -->
<g fill="#4c4c4c">
<rect x="1591" y="900" width="326" height="20" rx="3"/><rect x="1591" y="922" width="326" height="20" rx="3"/><rect x="1591" y="944" width="326" height="20" rx="3"/><rect x="1591" y="966" width="326" height="20" rx="3"/><rect x="1591" y="988" width="326" height="20" rx="3"/>
</g>
<text class="b" x="1752" y="910" textLength="48" lengthAdjust="spacingAndGlyphs">配信開始</text>
<text class="b" x="1752" y="932" textLength="48" lengthAdjust="spacingAndGlyphs">録画開始</text>
<text class="b" x="1752" y="954" textLength="65" lengthAdjust="spacingAndGlyphs">スタジオモード</text>
<text class="b" x="1752" y="976" textLength="24" lengthAdjust="spacingAndGlyphs">設定</text>
<text class="b" x="1752" y="998" textLength="24" lengthAdjust="spacingAndGlyphs">終了</text>

<!-- status bar -->
<circle cx="1556" cy="1028" r="3.500" fill="#888"/>
<path d="M1551 1022a8 8 0 0 0 0 12M1561 1022a8 8 0 0 1 0 12M1548.500 1020a11 11 0 0 0 0 16M1563.500 1020a11 11 0 0 1 0 16" fill="none" stroke="#777" stroke-width="1"/>
<text x="1573" y="1028" font-size="12" fill="#d6d6d6" textLength="70" lengthAdjust="spacingAndGlyphs">LIVE: 00:00:00</text>
<circle cx="1659" cy="1028" r="5" fill="#888"/>
<text x="1675" y="1028" font-size="12" fill="#d6d6d6" textLength="69" lengthAdjust="spacingAndGlyphs">REC: 00:00:00</text>
<text x="1769" y="1028" font-size="12" fill="#d6d6d6" textLength="101" lengthAdjust="spacingAndGlyphs">CPU: 2.0%, 60.00 fps</text>
</svg>
</body>
</html>
